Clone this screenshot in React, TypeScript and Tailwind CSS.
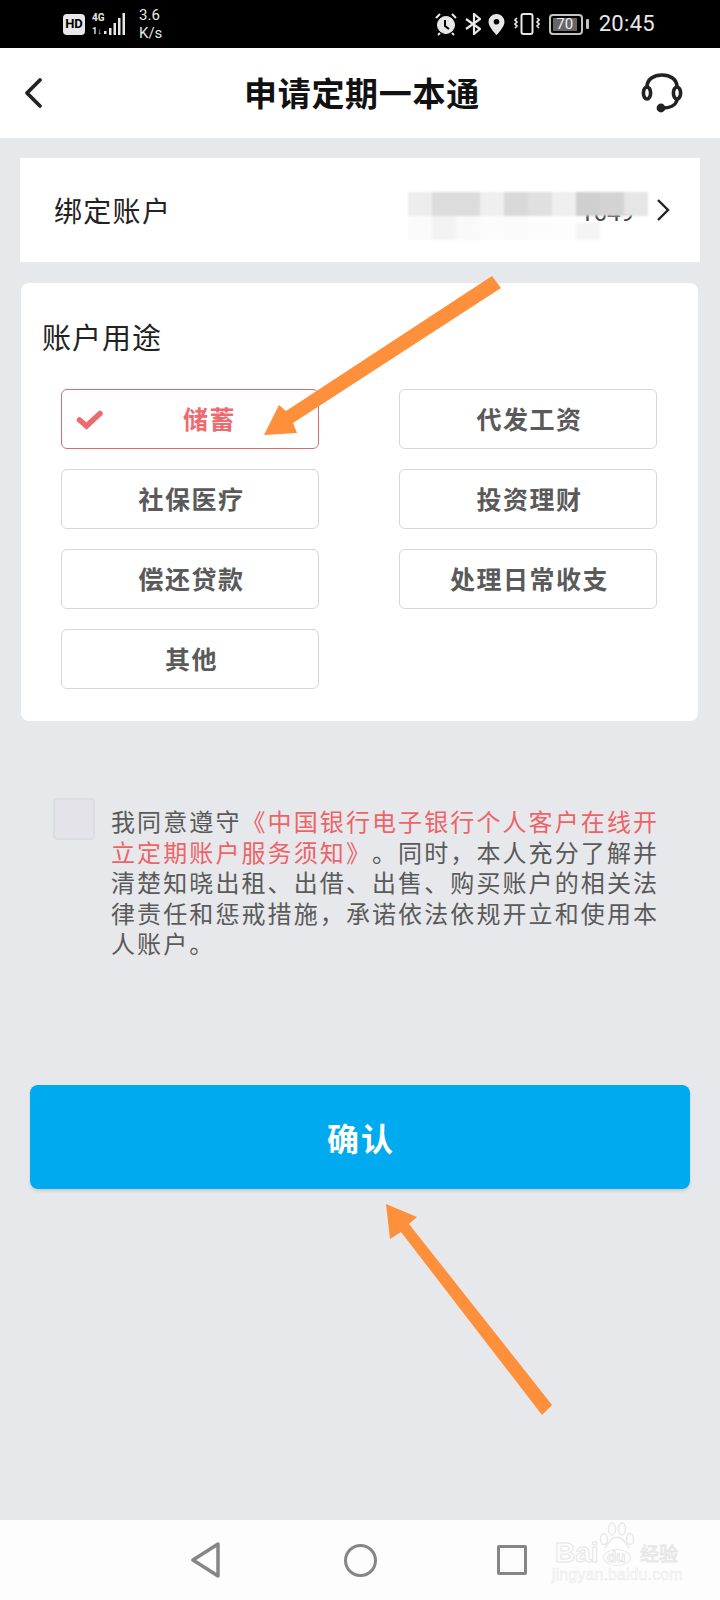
const cjk = "font-['Noto_Sans_CJK_SC','Noto_Sans_CJK_TC',sans-serif]";

const purposes = [
  ["储蓄", "代发工资"],
  ["社保医疗", "投资理财"],
  ["偿还贷款", "处理日常收支"],
  ["其他", ""],
];

const mosaic = [
  ["#ededed", "#dcdcdc", "#dcdcdc", "#efefef", "#d9d9d9", "#e0e0e0", "#efefef", "#cfcfcf", "#d3d3d3", "#e6e6e6"],
  ["#fbfbfb", "#f3f3f3", "#f9f9f9", "#fcfcfc", "#fbfbfb", "#fcfcfc", "#fdfdfd", "transparent", "transparent", "transparent"],
];

function StatusBar() {
  return (
    <div className="flex h-12 items-center bg-black pl-[63px] pr-[65px] text-[#e8e8e8]">
      <div className="flex h-[21px] w-[22px] items-center justify-center rounded-[4px] bg-[#e8e8e8] text-[13px] font-bold text-black font-['Roboto',sans-serif]">
        HD
      </div>
      <svg width="36" height="24" viewBox="0 0 36 24" className="ml-[6px]" fill="currentColor">
        <text x="1" y="9" fontSize="10" fontWeight="700" fontFamily="Roboto">4G</text>
        <text x="1" y="22" fontSize="9" fontWeight="700" fontFamily="Roboto">1↓</text>
        <rect x="13" y="19" width="2.5" height="3" />
        <rect x="18" y="16" width="2.5" height="7" />
        <rect x="22.5" y="11" width="2.5" height="12" />
        <rect x="27" y="6" width="2.5" height="17" />
        <rect x="31.5" y="1" width="2.5" height="22" />
      </svg>
      <div className="ml-[12px] text-[15px] leading-[18px] font-['Roboto',sans-serif]">
        <div>3.6</div>
        <div>K/s</div>
      </div>
      <div className="ml-auto flex items-center">
        <svg width="24" height="24" viewBox="0 0 24 24" fill="none" stroke="currentColor">
          <circle cx="12" cy="13" r="8.5" fill="currentColor" />
          <path d="M11 8v6l4 3" stroke="#000" strokeWidth="2" />
          <path d="M2 6l4-4M22 6l-4-4M6 21l-2 2M18 21l2 2" strokeWidth="2" />
        </svg>
        <svg width="16" height="22" viewBox="0 0 16 22" fill="none" stroke="currentColor" strokeWidth="2.2" className="ml-[7px]">
          <path d="M1 6l14 10-6 5V1l6 5L1 16" />
        </svg>
        <svg width="17" height="21" viewBox="0 0 17 21" className="ml-[7px]" fill="currentColor">
          <path fillRule="evenodd" d="M8.5 0a8 8 0 0 0-8 8c0 5 8 13 8 13s8-8 8-13a8 8 0 0 0-8-8zm0 10.5a2.8 2.8 0 1 1 0-5.6 2.8 2.8 0 0 1 0 5.6z" />
        </svg>
        <svg width="26" height="22" viewBox="0 0 26 22" fill="none" stroke="currentColor" className="ml-[9px]">
          <rect x="7.5" y="1" width="11" height="20" rx="2" strokeWidth="2" />
          <path d="M3 5L1 7l2 2-2 2 2 2-2 2M23 5l2 2-2 2 2 2-2 2 2 2" strokeWidth="1.6" />
        </svg>
        <div className="ml-[9px] flex items-center">
          <div className="flex h-[21px] w-[34px] rounded-[4px] border-2 border-[#c4c4c4] p-[2px]">
            <div className="flex w-[24px] items-center justify-center bg-[#666666] text-[15px] leading-none text-[#eeeeee] font-['Roboto',sans-serif]">
              70
            </div>
          </div>
          <div className="ml-[3px] h-[10px] w-[3px] rounded-[1px] bg-[#c4c4c4]" />
        </div>
        <div className="ml-[10px] text-[22px] leading-none tracking-[0.3px] font-['Roboto',sans-serif]">20:45</div>
      </div>
    </div>
  );
}

function Header() {
  return (
    <div className="flex h-[90px] items-center bg-white pl-6 pr-[37px]">
      <svg width="20" height="32" viewBox="0 0 20 32" fill="none" stroke="#222" strokeWidth="3.8" strokeLinecap="round" strokeLinejoin="round">
        <path d="M16 3L3 16l13 13" />
      </svg>
      <h1 className={`${cjk} ml-[200px] text-[33px] font-bold text-[#111] tracking-[0.7px]`}>申请定期一本通</h1>
      <svg width="42" height="40" viewBox="0 0 42 40" fill="none" stroke="#222" strokeWidth="3.6" strokeLinecap="round" className="ml-auto">
        <path d="M6 14C6 6 13 2 21 2s15 4 15 12" />
        <ellipse cx="6" cy="20" rx="3.6" ry="6" />
        <ellipse cx="36" cy="20" rx="3.6" ry="6" />
        <path d="M36 27c-1 5-7 8-15 8" />
        <circle cx="20" cy="35" r="2.6" fill="#222" />
      </svg>
    </div>
  );
}

function BoundAccount() {
  return (
    <div className="relative mx-5 mt-5 flex h-[104px] items-center bg-white pl-[34px] pr-[30px]">
      <span className={`${cjk} text-[28px] text-[#222] tracking-[1.3px]`}>绑定账户</span>
      <span className="ml-auto mr-[22px] mt-[5px] text-[24px] leading-none text-[#444] font-['Roboto',sans-serif]">1649</span>
      <svg width="14" height="24" viewBox="0 0 14 24" fill="none" stroke="#222" strokeWidth="2.4">
        <path d="M2 2l10 10L2 22" />
      </svg>
      {/* blurred-out account number */}
      <div className="absolute left-[388px] top-[34px] blur-[0.8px]">
        {mosaic.map((row, i) => (
          <div key={i} className="flex">
            {row.map((c, j) => (
              <div key={j} className="h-6 w-6" style={{ backgroundColor: c }} />
            ))}
          </div>
        ))}
        <div className="absolute left-[168px] top-[31px] h-[17px] w-6 bg-[#f4f4f4]" />
      </div>
    </div>
  );
}

function PurposeCard() {
  return (
    <div className="ml-[21px] mr-[22px] mt-[21px] h-[438px] rounded-lg bg-white pl-[21px] pt-[35px]">
      <h2 className={`${cjk} text-[29px] leading-9 text-[#222] tracking-[1px]`}>账户用途</h2>
      <div className="mt-[35px] ml-[19px] grid grid-cols-[258px_258px] gap-x-[80px] gap-y-5">
        {purposes.flat().map((label, i) => {
          if (!label) return <div key={i} />;
          const selected = i === 0;
          return (
            <div
              key={i}
              className={`${cjk} relative flex h-[60px] items-center justify-center rounded-md border pl-[3px] text-[25px] font-bold tracking-[1.5px] ${
                selected ? "border-[#cf6f72] text-[#ee6a6e]" : "border-[#d6d6d8] text-[#5a5a5a]"
              }`}
            >
              {selected && (
                <svg width="28" height="20" viewBox="0 0 28 20" fill="none" stroke="#ee6a6e" strokeWidth="5.5" strokeLinecap="round" className="absolute left-[14px] top-[20px]">
                  <path d="M3.5 10l7 6L24 3.5" />
                </svg>
              )}
              <span className={selected ? "ml-[36px]" : ""}>{label}</span>
            </div>
          );
        })}
      </div>
    </div>
  );
}

function Agreement() {
  return (
    <div className="ml-[53px] mr-[60px] mt-[77px] flex">
      <div className="h-[42px] w-[42px] shrink-0 rounded-[4px] border-2 border-[#dcdde3] bg-[#e3e3e9]" />
      <div className={`${cjk} ml-4 mt-2 whitespace-nowrap text-[24px] leading-[30.5px] tracking-[2.1px] text-[#5a5a5a] [text-spacing-trim:space-all]`}>
        <div>
          我同意遵守<span className="text-[#ec6468]">《中国银行电子银行个人客户在线开</span>
        </div>
        <div>
          <span className="text-[#ec6468]">立定期账户服务须知》</span>。同时，本人充分了解并
        </div>
        <div>清楚知晓出租、出借、出售、购买账户的相关法</div>
        <div>律责任和惩戒措施，承诺依法依规开立和使用本</div>
        <div>人账户。</div>
      </div>
    </div>
  );
}

function Watermark() {
  return (
    <div className="absolute left-[552px] top-0 h-[66px] w-[130px] text-transparent [-webkit-text-stroke:1px_#e6e6e6]">
      <svg width="38" height="34" viewBox="0 0 38 34" fill="none" stroke="#e8e8e8" strokeWidth="1.5" className="absolute left-[46px] top-[2px]">
        <ellipse cx="6" cy="17" rx="3.5" ry="5.5" />
        <ellipse cx="14" cy="7" rx="3.5" ry="6" />
        <ellipse cx="24" cy="7" rx="3.5" ry="6" />
        <ellipse cx="32" cy="17" rx="3.5" ry="5.5" />
        <path d="M19 15c-5 0-8 5-12 11M19 15c5 0 8 5 12 11" />
      </svg>
      <div className="absolute left-[51px] top-[29px] h-[17px] w-[28px] rounded-[50%] border border-[#e8e8e8]" />
      <span className="absolute left-[3px] top-[17px] text-[28px] leading-8 font-bold font-['Liberation_Sans',sans-serif]">Bai</span>
      <span className="absolute left-[55px] top-[27px] text-[15px] leading-5 font-bold font-['Liberation_Sans',sans-serif]">du</span>
      <span className={`${cjk} absolute left-[88px] top-[17px] text-[19px] leading-8`}>经验</span>
      <span className="absolute left-0 top-[46px] text-[16px] leading-[18px] tracking-[0.1px] [-webkit-text-stroke:0.5px_#e8e8e8] font-['Liberation_Sans',sans-serif]">jingyan.baidu.com</span>
    </div>
  );
}

function NavBar() {
  return (
    <div className="relative flex h-20 items-center bg-[#fdfdfd] pl-[191px]">
      <svg width="30" height="36" viewBox="0 0 30 36" fill="none" stroke="#868686" strokeWidth="3.5" strokeLinejoin="round">
        <path d="M27 2v32L2 18z" />
      </svg>
      <div className="ml-[123px] h-[33px] w-[33px] rounded-full border-[3.5px] border-[#868686]" />
      <div className="ml-[120px] h-[30px] w-[30px] rounded-[2px] border-[3.5px] border-[#868686]" />
      <Watermark />
    </div>
  );
}

export default function App() {
  return (
    <div className="relative flex h-[1600px] w-[720px] flex-col overflow-hidden bg-[#e7e8ec]">
      <StatusBar />
      <Header />
      <BoundAccount />
      <PurposeCard />
      <Agreement />
      <div className="mx-[30px] mt-[126px] flex h-[104px] items-center justify-center rounded-lg bg-[#00aaef] pl-[2px] shadow-[0_2px_3px_rgba(0,0,0,0.12)]">
        <span className={`${cjk} text-[32px] font-bold tracking-[2px] text-white`}>确认</span>
      </div>
      <div className="flex-1" />
      <NavBar />

      {/* annotation arrows drawn over the screenshot */}
      <svg width="720" height="1600" viewBox="0 0 720 1600" className="pointer-events-none absolute left-0 top-0" fill="#fe8f3b">
        <polygon points="492,276 501,288 293,423 297,433 264,435 279,405 286,411" />
        <polygon points="552,1405 542,1415 401,1232 390,1239 386,1204 417,1217 409,1224" />
      </svg>
    </div>
  );
}
